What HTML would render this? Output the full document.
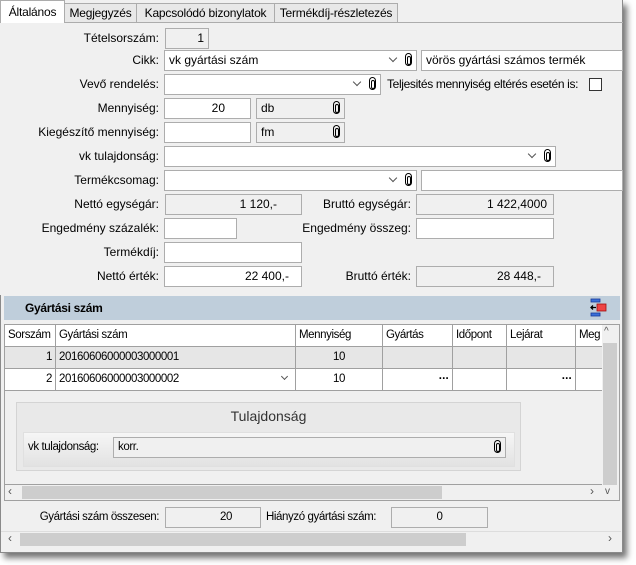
<!DOCTYPE html>
<html><head><meta charset="utf-8"><style>
*{box-sizing:border-box;margin:0;padding:0}
body{width:636px;height:565px;background:#fff;position:relative;overflow:hidden;font-family:"Liberation Sans",sans-serif;font-size:12px;color:#000}
.a{position:absolute}
.win{left:0;top:0;width:623px;height:553px;border:1px solid #8a8a8a;border-top:none;background:#f0f0f0;box-shadow:4px 5px 6px rgba(0,0,0,.55)}
.tab{position:absolute;top:3px;height:20px;border:1px solid #acacac;background:#e8e8e8;font-size:12px;line-height:18px;text-align:center;white-space:nowrap;letter-spacing:-.2px}
.lbl{position:absolute;text-align:right;white-space:nowrap;line-height:20px;font-size:12px}
.f{position:absolute;height:21px;border:1px solid #adadad;background:#fff;line-height:19px;padding:0 4px;white-space:nowrap;overflow:hidden}
.g{background:#f0f0f0}
.r{text-align:right}
.clip{position:absolute;right:4px;top:2px;width:7px;height:13px;border:1.5px solid #000;border-radius:4px}
.clip:after{content:"";position:absolute;left:1px;top:2px;width:2px;height:7px;border:1px solid #000;border-radius:2px}
.dd{position:absolute;top:4px;width:6px;height:6px;border-right:1.5px solid #555;border-bottom:1.5px solid #555;transform:rotate(45deg)}
.cond{font-size:11.5px;letter-spacing:-0.4px}
.cell{position:absolute;border-right:1px solid #a0a0a0;border-bottom:1px solid #a0a0a0;line-height:21px;padding:0 3px;white-space:nowrap;overflow:hidden}
</style></head><body>
<div class="a win"></div>
<!-- tabs -->
<div class="a" style="left:0;top:22px;width:623px;height:1px;background:#acacac"></div>
<div class="tab" style="left:64px;width:73px">Megjegyzés</div>
<div class="tab" style="left:136px;width:139px">Kapcsolódó bizonylatok</div>
<div class="tab" style="left:274px;width:124px">Termékdíj-részletezés</div>
<div class="tab" style="left:0;top:0;width:65px;height:24px;background:#fff;border-bottom:none;line-height:22px">Általános</div>
<div class="a" style="left:0;top:23px;width:622px;height:272px;background:#f0f0f0"></div>

<div class="lbl" style="right:477px;top:28px">Tételsorszám:</div>
<div class="f g r" style="left:165px;top:28px;width:44px">1</div>

<div class="lbl" style="right:477px;top:50px">Cikk:</div>
<div class="f" style="left:164px;top:50px;width:253px">vk gyártási szám<span class="dd" style="left:225px"></span><span class="clip"></span></div>
<div class="f" style="left:421px;top:50px;width:202px">vörös gyártási számos termék</div>

<div class="lbl" style="right:477px;top:74px">Vevő rendelés:</div>
<div class="f" style="left:164px;top:74px;width:217px"><span class="dd" style="left:189px"></span><span class="clip"></span></div>
<div class="lbl" style="left:387px;top:74px;letter-spacing:-.35px">Teljesités mennyiség eltérés esetén is:</div>
<div class="a" style="left:589px;top:78px;width:13px;height:13px;border:1px solid #333;background:#fff"></div>

<div class="lbl" style="right:477px;top:98px">Mennyiség:</div>
<div class="f r" style="left:164px;top:98px;width:87px;padding-right:25px">20</div>
<div class="f g" style="left:256px;top:98px;width:89px">db<span class="clip"></span></div>

<div class="lbl" style="right:477px;top:122px">Kiegészítő mennyiség:</div>
<div class="f" style="left:164px;top:122px;width:87px"></div>
<div class="f g" style="left:256px;top:122px;width:89px">fm<span class="clip"></span></div>

<div class="lbl" style="right:477px;top:146px">vk tulajdonság:</div>
<div class="f" style="left:164px;top:146px;width:392px"><span class="dd" style="left:364px"></span><span class="clip"></span></div>

<div class="lbl" style="right:477px;top:170px">Termékcsomag:</div>
<div class="f" style="left:164px;top:170px;width:253px"><span class="dd" style="left:225px"></span><span class="clip"></span></div>
<div class="f" style="left:421px;top:170px;width:202px"></div>

<div class="lbl" style="right:477px;top:194px">Nettó egységár:</div>
<div class="f g r" style="left:165px;top:194px;width:137px;padding-right:24px">1 120,-</div>
<div class="lbl" style="right:225px;top:194px">Bruttó egységár:</div>
<div class="f g r" style="left:416px;top:194px;width:138px;padding-right:6px">1 422,4000</div>

<div class="lbl" style="right:477px;top:218px">Engedmény százalék:</div>
<div class="f" style="left:164px;top:218px;width:73px"></div>
<div class="lbl" style="right:225px;top:218px">Engedmény összeg:</div>
<div class="f" style="left:416px;top:218px;width:138px"></div>

<div class="lbl" style="right:477px;top:242px">Termékdíj:</div>
<div class="f" style="left:164px;top:242px;width:138px"></div>

<div class="lbl" style="right:477px;top:266px">Nettó érték:</div>
<div class="f r" style="left:164px;top:266px;width:138px;padding-right:12px">22 400,-</div>
<div class="lbl" style="right:225px;top:266px">Bruttó érték:</div>
<div class="f g r" style="left:416px;top:266px;width:138px;padding-right:12px">28 448,-</div>

<!-- group header -->
<div class="a" style="left:4px;top:296px;width:616px;height:24px;background:#bfcedb;font-weight:bold;line-height:24px;padding-left:21px" ><span class="cond" style="font-size:12px;letter-spacing:-.3px">Gyártási szám</span></div>
<svg class="a" style="left:590px;top:298px" width="18" height="20"><rect x="1" y="1" width="9" height="3" fill="#3a6fd8" stroke="#1a3a9a" stroke-width=".8"/><rect x="1" y="15" width="9" height="3" fill="#3a6fd8" stroke="#1a3a9a" stroke-width=".8"/><rect x="7" y="6" width="9" height="7" fill="#ee4444" stroke="#a01010" stroke-width=".8"/><path d="M1 9.5h5M3 7.5l-2 2 2 2" stroke="#000" stroke-width="1.3" fill="none"/></svg>

<!-- grid -->
<div class="a" style="left:4px;top:324px;width:616px;height:177px;border:1px solid #a0a0a0;background:#f0f0f0"></div>
<div class="a cond" style="left:5px;top:325px;width:597px;height:22px;background:#fff">
  <div class="cell" style="left:0;width:51px;top:0;height:22px">Sorszám</div>
  <div class="cell" style="left:51px;width:240px;top:0;height:22px">Gyártási szám</div>
  <div class="cell" style="left:291px;width:87px;top:0;height:22px">Mennyiség</div>
  <div class="cell" style="left:378px;width:70px;top:0;height:22px">Gyártás</div>
  <div class="cell" style="left:448px;width:54px;top:0;height:22px">Időpont</div>
  <div class="cell" style="left:502px;width:69px;top:0;height:22px">Lejárat</div>
  <div class="cell" style="left:571px;width:26px;top:0;height:22px;border-right:none">Meg</div>
</div>
<div class="a cond" style="left:5px;top:347px;width:597px;height:22px;background:#e6e6e6">
  <div class="cell r" style="left:0;width:51px;top:0;height:22px">1</div>
  <div class="cell" style="left:51px;width:240px;top:0;height:22px">20160606000003000001</div>
  <div class="cell" style="left:291px;width:87px;top:0;height:22px;text-align:center">10</div>
  <div class="cell" style="left:378px;width:70px;top:0;height:22px"></div>
  <div class="cell" style="left:448px;width:54px;top:0;height:22px"></div>
  <div class="cell" style="left:502px;width:69px;top:0;height:22px"></div>
  <div class="cell" style="left:571px;width:26px;top:0;height:22px;border-right:none"></div>
</div>
<div class="a cond" style="left:5px;top:369px;width:597px;height:22px;background:#fff">
  <div class="cell r" style="left:0;width:51px;top:0;height:22px">2</div>
  <div class="cell" style="left:51px;width:240px;top:0;height:22px">20160606000003000002<span class="dd" style="left:226px;top:5px;width:5px;height:5px"></span></div>
  <div class="cell" style="left:291px;width:87px;top:0;height:22px;text-align:center">10</div>
  <div class="cell r" style="left:378px;width:70px;top:0;height:22px;font-weight:bold">···</div>
  <div class="cell" style="left:448px;width:54px;top:0;height:22px"></div>
  <div class="cell r" style="left:502px;width:69px;top:0;height:22px;font-weight:bold">···</div>
  <div class="cell" style="left:571px;width:26px;top:0;height:22px;border-right:none"></div>
</div>
<!-- detail -->
<div class="a" style="left:5px;top:391px;width:597px;height:94px;background:#f0f0f0;border-bottom:1px solid #a0a0a0"></div>
<div class="a" style="left:16px;top:402px;width:505px;height:69px;border:1px solid #d4d4d4;background:#e9e9e9"></div>
<div class="a" style="left:16px;top:408px;width:505px;text-align:center;font-size:14px;color:#333">Tulajdonság</div>
<div class="a" style="left:23px;top:432px;width:492px;height:35px;background:linear-gradient(#f6f6f6,#e2e2e2);border:1px solid #e0e0e0"></div>
<div class="lbl cond" style="left:28px;top:437px">vk tulajdonság:</div>
<div class="f cond" style="left:113px;top:437px;width:393px;height:21px;background:#f0f0f0">korr.<span class="clip"></span></div>
<!-- v scrollbar -->
<div class="a" style="left:602px;top:325px;width:17px;height:175px;background:#f0f0f0"></div>
<div class="a" style="left:603px;top:343px;width:14px;height:142px;background:#cdcdcd"></div>
<div class="a" style="left:604px;top:326px;font-size:10px;color:#555">^</div>
<div class="a" style="left:605px;top:486px;font-size:10px;color:#555">v</div>
<!-- h scrollbar -->
<div class="a" style="left:5px;top:485px;width:597px;height:15px;background:#f0f0f0"></div>
<div class="a" style="left:22px;top:486px;width:420px;height:13px;background:#cdcdcd"></div>
<div class="a" style="left:8px;top:484px;font-size:12px;color:#555">‹</div>
<div class="a" style="left:590px;top:484px;font-size:12px;color:#555">›</div>

<!-- footer -->
<div class="lbl cond" style="right:477px;top:507px">Gyártási szám összesen:</div>
<div class="f g r cond" style="left:165px;top:507px;width:96px;padding-right:28px">20</div>
<div class="lbl cond" style="left:266px;top:507px">Hiányzó gyártási szám:</div>
<div class="f g cond" style="left:391px;top:507px;width:97px;text-align:center">0</div>

<div class="a" style="left:1px;top:531px;width:620px;height:17px;background:#f0f0f0;border-top:1px solid #ddd"></div>
<div class="a" style="left:20px;top:533px;width:446px;height:13px;background:#cdcdcd"></div>
<div class="a" style="left:8px;top:531px;font-size:12px;color:#555">‹</div>
<div class="a" style="left:608px;top:531px;font-size:12px;color:#555">›</div>
</body></html>
